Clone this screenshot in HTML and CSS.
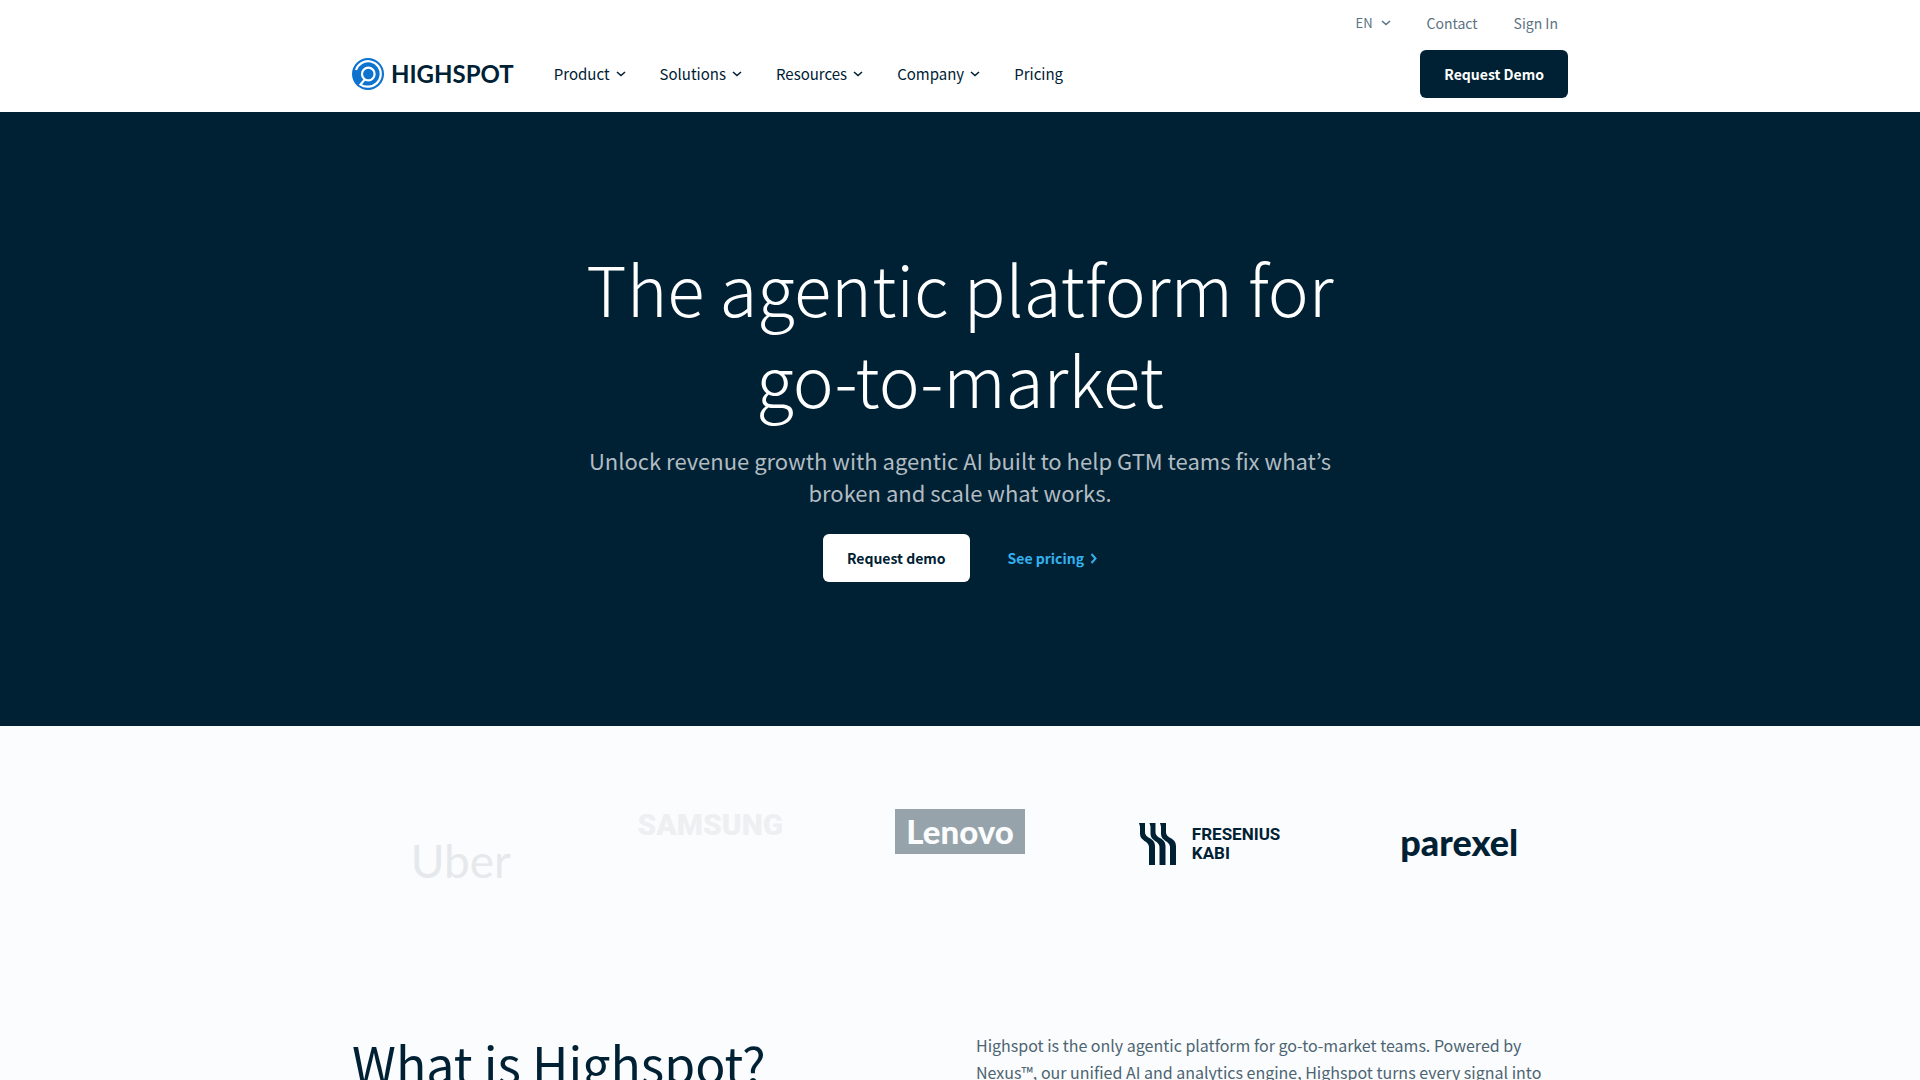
FILE: index.html
```html
<!DOCTYPE html>
<html lang="en">
<head>
<meta charset="utf-8">
<meta name="viewport" content="width=device-width, initial-scale=1">
<title>Highspot | The agentic platform for go-to-market</title>
<link rel="stylesheet" href="styles.css">
</head>
<body>
<header class="header">
  <div class="container">
    <div class="utility">
      <button class="language" type="button">EN <svg class="chevron" viewBox="0 0 10 6"><path d="M1 1l4 3.500L9 1"/></svg></button>
      <a href="#contact">Contact</a>
      <a href="#signin">Sign In</a>
    </div>
    <div class="bar">
      <a class="brand" href="#home">
        <svg class="brand-mark" viewBox="0 0 32 32" aria-hidden="true">
          <circle cx="16" cy="16" r="16" fill="#0d73cf"/>
          <g fill="none" stroke="#fff" stroke-width="2.2">
            <path d="M4 12A12.700 12.700 0 1 1 16.500 28.600Q12 29 8.500 26.600L12.600 21.600"/>
            <circle cx="16.300" cy="16" r="6.300"/>
          </g>
        </svg>
        <span class="brand-name">HIGHSPOT</span>
      </a>
      <nav class="nav" aria-label="Main">
        <button type="button">Product <svg class="chevron" viewBox="0 0 10 6"><path d="M1 1l4 3.500L9 1"/></svg></button>
        <button type="button">Solutions <svg class="chevron" viewBox="0 0 10 6"><path d="M1 1l4 3.500L9 1"/></svg></button>
        <button type="button">Resources <svg class="chevron" viewBox="0 0 10 6"><path d="M1 1l4 3.500L9 1"/></svg></button>
        <button type="button">Company <svg class="chevron" viewBox="0 0 10 6"><path d="M1 1l4 3.500L9 1"/></svg></button>
        <a href="#pricing">Pricing</a>
      </nav>
      <button class="button button-dark" type="button">Request Demo</button>
    </div>
  </div>
</header>
<main>
  <section class="hero">
    <div class="hero-text">
      <h1>The agentic platform for go-to-market</h1>
      <p>Unlock revenue growth with agentic AI built to help GTM teams fix what’s broken and scale what works.</p>
      <div class="actions">
        <button class="button button-light" type="button">Request demo</button>
        <a class="more" href="#pricing">See pricing <svg viewBox="0 0 7 11"><path d="M1.500 1l4 4.500-4 4.500"/></svg></a>
      </div>
    </div>
  </section>
  <section class="customers" aria-label="Customers">
    <div class="customer uber">Uber</div>
    <div class="customer samsung">SAMSUNG</div>
    <div class="customer lenovo"><span>Lenovo</span></div>
    <div class="customer fresenius">
      <svg viewBox="0 0 37 42" aria-hidden="true">
        <g fill="#002134">
          <path d="M0 0H6V9C6 16 16 14 16 23V42H10V24C10 18 1 18 1 11V4C1 2 0 1 0 0Z"/>
          <path d="M10.500 0H16.500V9C16.500 16 26.500 14 26.500 23V42H20.500V24C20.500 18 11.500 18 11.500 11V4C11.500 2 10.500 1 10.500 0Z"/>
          <path d="M21 0H27V9C27 16 37 14 37 23V42H31V24C31 18 22 18 22 11V4C22 2 21 1 21 0Z"/>
        </g>
      </svg>
      <span>FRESENIUS<br>KABI</span>
    </div>
    <div class="customer parexel">parexel</div>
  </section>
  <section class="about container">
    <h2>What is Highspot?</h2>
    <p>Highspot is the only agentic platform for go-to-market teams. Powered by Nexus™, our unified AI and analytics engine, Highspot turns every signal into</p>
  </section>
</main>
</body>
</html>
```
FILE: styles.css
```css
* { box-sizing: border-box; }
body {
  margin: 0;
  background: #fbfcfe;
  color: #002134;
  font-family: "Noto Sans CJK KR", "Noto Sans", sans-serif;
  font-size: 14px;
  line-height: 20px;
}
a { color: inherit; text-decoration: none; }
button { border: 0; padding: 0; background: none; color: inherit; font: inherit; cursor: pointer; }
h1, h2, p { margin: 0; }
.container { width: 100%; max-width: 1280px; margin: 0 auto; padding: 0 32px; }
.header { background: #fff; }
.utility { display: flex; justify-content: flex-end; align-items: center; gap: 36px; height: 46px; padding-right: 10px; color: #5b7382; }
.language { display: flex; align-items: center; gap: 8px; font-size: 13px; }
.chevron { width: 10px; height: 6px; fill: none; stroke: currentColor; stroke-width: 1.6; }
.bar { display: flex; align-items: center; padding: 4px 0 14px; }
.brand { display: flex; align-items: center; gap: 7px; margin-right: 40px; }
.brand-mark { width: 32px; height: 32px; }
.brand-name { font: 700 24px/32px Lato, sans-serif; }
.nav { display: flex; flex: 1; gap: 34px; font-size: 15px; }
.nav button { display: flex; align-items: center; gap: 6px; }
.button { height: 48px; padding: 0 24px; border-radius: 6px; font-weight: 700; }
.button-dark { background: #002134; color: #fff; }
.button-light { background: #fff; color: #002134; }
.hero { background: #002134; color: #fff; padding: 130px 32px 144px; text-align: center; }
.hero-text { max-width: 800px; margin: 0 auto; }
h1 { font-size: 69px; line-height: 91px; font-weight: 300; }
.hero p { margin-top: 20px; padding: 0 20px; font-size: 22px; line-height: 32px; color: #b2bcc2; }
.actions { display: flex; justify-content: center; align-items: center; gap: 38px; margin-top: 26px; }
.more { display: flex; align-items: center; gap: 6px; color: #35b0ee; font-weight: 700; }
.more svg { width: 7px; height: 11px; fill: none; stroke: currentColor; stroke-width: 2; }
.customers { display: grid; grid-template-columns: repeat(5, 1fr); max-width: 1248px; height: 120px; margin: 58px auto 0; }
.customer { display: flex; align-items: center; justify-content: center; }
.uber { padding-top: 34px; font: 400 46px/48px Lato, sans-serif; color: #e6e9eb; }
.samsung { padding-bottom: 38px; font: 900 30px/32px Roboto, sans-serif; color: #eeeff1; }
.lenovo { padding-bottom: 26px; }
.lenovo span { padding: 0 11px; background: #96a3ab; color: #fbfcfe; font: 900 33px/45px Lato, sans-serif; }
.fresenius { gap: 16px; font: 700 17px/19px Roboto, sans-serif; }
.fresenius svg { width: 37px; height: 42px; }
.parexel { padding-bottom: 4px; font: 900 36px/40px Lato, sans-serif; }
.about { display: grid; grid-template-columns: 1fr 1fr; gap: 32px; padding-top: 128px; }
.about h2 { font-size: 50px; line-height: 60px; font-weight: 400; }
.about p { font-size: 16px; line-height: 27px; color: #4d6471; }
```
